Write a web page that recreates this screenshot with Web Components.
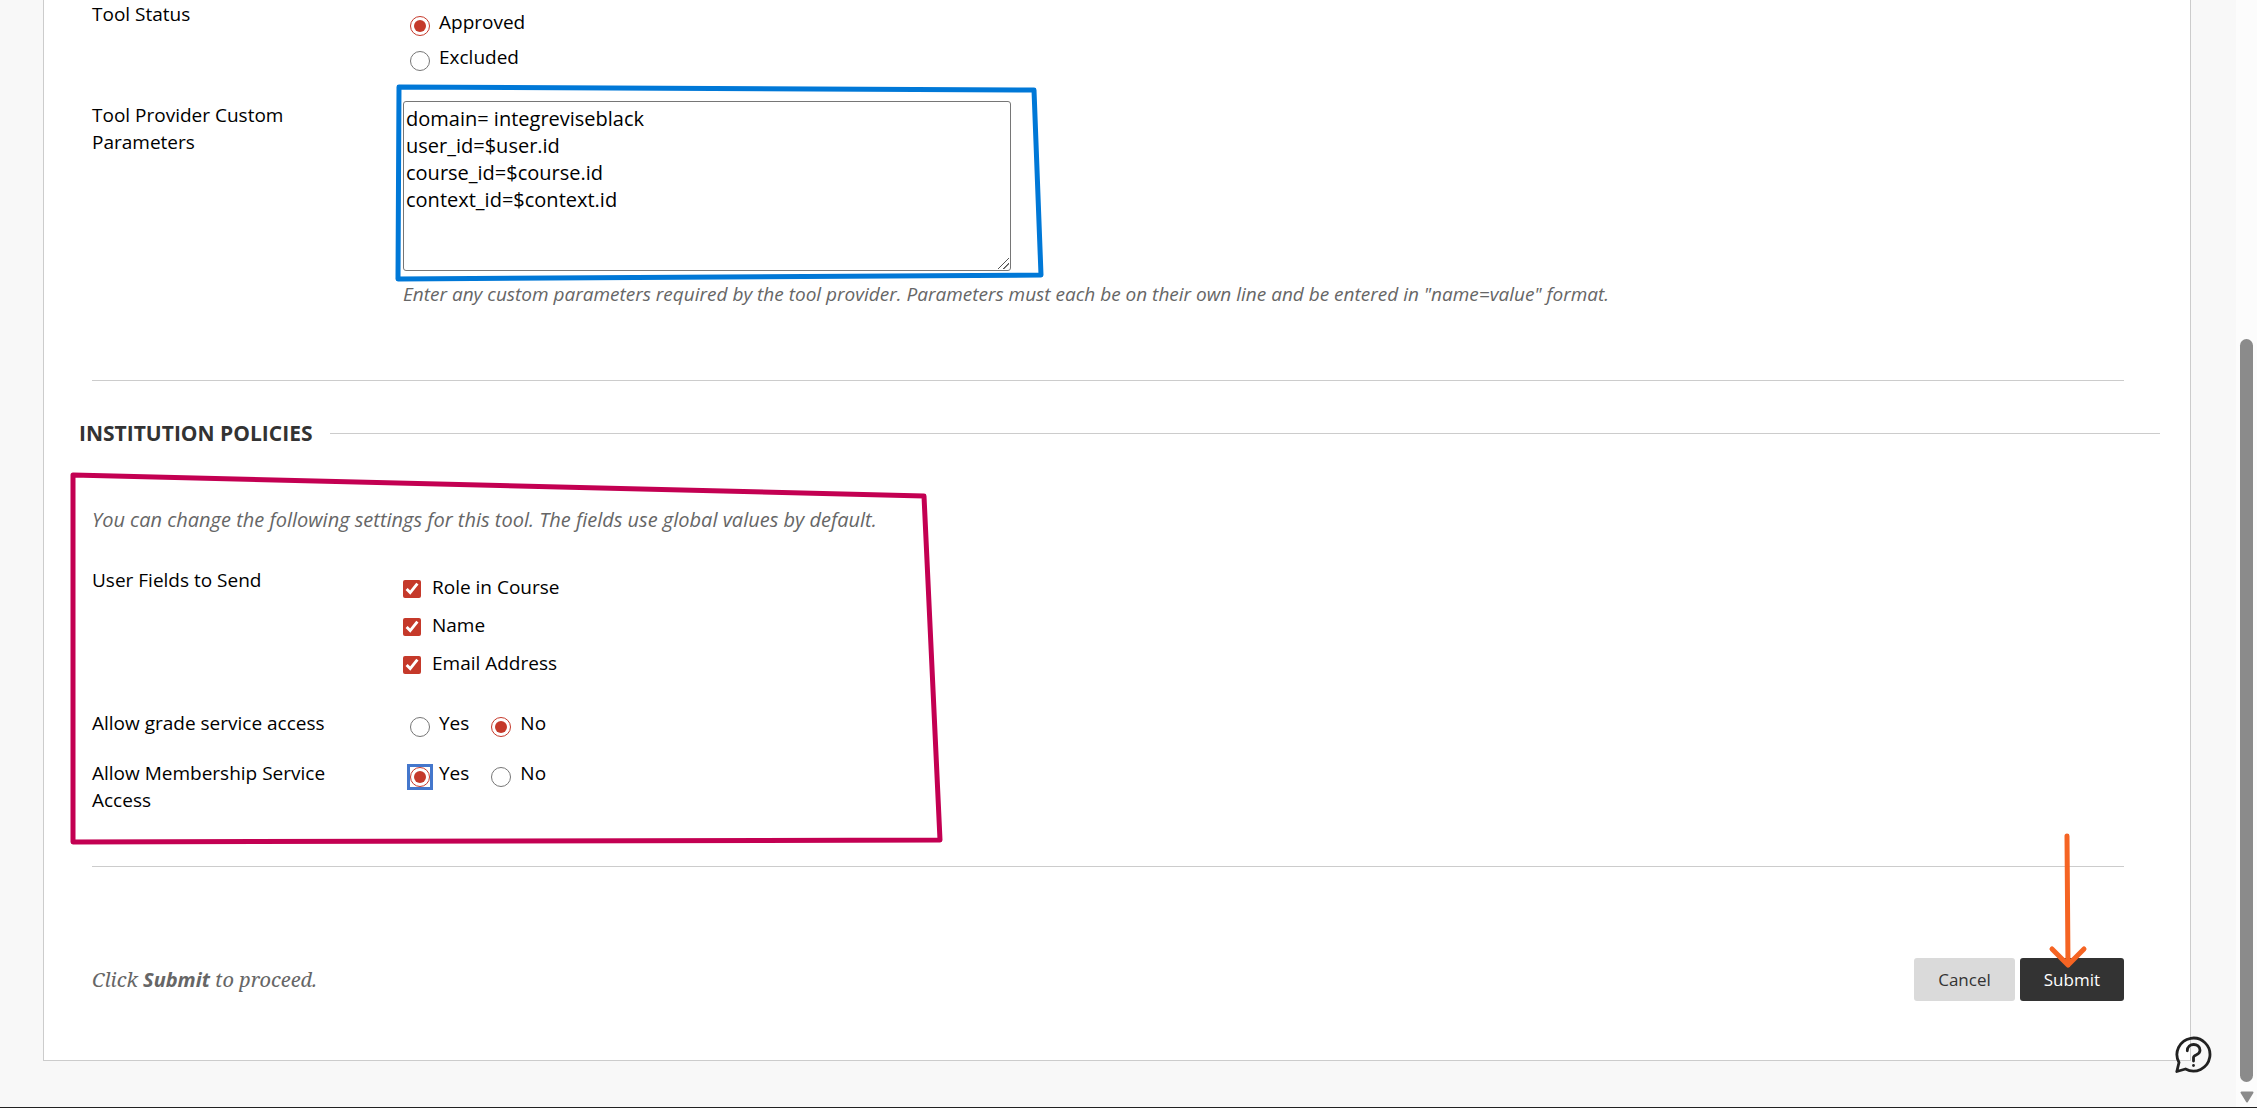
<!DOCTYPE html>
<html lang="en">
<head>
<meta charset="utf-8">
<title>Tool Provider Settings</title>
<style>
html,body{margin:0;padding:0}
body{background:#f8f8f8;color:#000;font:19px/27px "Open Sans","Noto Sans",sans-serif;overflow:hidden}
</style>
</head>
<body>
<tool-page></tool-page>
<script>
const define=(name,html,setup)=>{
  const t=document.createElement('template');
  t.innerHTML=html;
  customElements.define(name,class extends HTMLElement{
    constructor(){
      super();
      this.attachShadow({mode:'open'}).appendChild(t.content.cloneNode(true));
      if(setup)this.setup=setup;
    }
    connectedCallback(){if(this.setup)this.setup(this.shadowRoot);}
  });
};

define('form-row',`
<style>
:host{display:flex;align-items:flex-start}
.label{flex:none;width:256px;margin-right:55px;padding-top:1px}
.field{flex:1;min-width:0}
</style>
<div class="label"><slot name="label"></slot></div>
<div class="field"><slot></slot></div>`);

define('choice-item',`
<style>
:host{display:flex}
label{display:flex;align-items:flex-end}
input{accent-color:#c5392a;flex:none}
input[type=radio]{width:20px;height:20px;margin:0 9px 0 7px}
input[type=checkbox]{width:18px;height:18px;margin:0 11px 3px 0}
:host([active]) input{outline:3px solid #4477cc}
</style>
<label><input><span><slot></slot></span></label>`,function(root){
  const i=root.querySelector('input');
  i.type=this.getAttribute('type');
  i.name=this.getAttribute('name');
  i.checked=this.hasAttribute('checked');
});

define('choice-group',`
<style>
:host{display:flex;flex-direction:column;gap:8px;padding-top:9px}
:host([kind=checks]){gap:11px;padding-top:8px}
:host([kind=inline]){flex-direction:row;gap:15px;padding-top:1px}
</style>
<slot></slot>`);

define('section-title',`
<style>
:host{display:flex;align-items:center;gap:18px}
h2{margin:0;font-size:21px;line-height:27px;font-weight:700;color:#333;text-transform:uppercase}
i{flex:1;height:1px;background:#ccc}
</style>
<h2><slot></slot></h2><i></i>`);

define('action-button',`
<style>
:host{display:flex}
button{height:43px;padding:0 24px;border:0;border-radius:3px;background:#dadada;color:#333;font:17px/27px "Open Sans","Noto Sans",sans-serif}
:host([primary]) button{background:#333;color:#fff}
</style>
<button type="button"><slot></slot></button>`);

define('marked-area',`
<style>
:host{display:block;position:relative}
svg{position:absolute;left:0;top:0;width:1px;height:1px;overflow:visible;pointer-events:none}
path{fill:none;stroke-width:5;stroke-linejoin:round;stroke-linecap:round}
</style>
<slot></slot><svg aria-hidden="true"><path/></svg>`,function(root){
  const p=root.querySelector('path');
  p.setAttribute('d',this.getAttribute('path'));
  p.setAttribute('stroke',this.getAttribute('stroke'));
});

define('help-button',`
<style>
:host{position:absolute;right:24px;bottom:34px}
button{display:block;padding:0;border:0;background:none}
svg{display:block;width:37px;height:37px}
</style>
<button type="button" aria-label="Help"><svg viewBox="0 0 37 37" fill="none" stroke="#222" stroke-width="2.800" stroke-linecap="round" stroke-linejoin="round">
<path d="M1.800 35.500 4 26.500A16.500 16.500 0 1 1 10.500 33Z"/>
<path d="M12.300 14.800C12.300 6.500 25 6.500 25 14.300C25 19.500 18.500 18.500 18.500 21.500V25"/><path d="M18.500 29.500V29.600"/></svg></button>`);

define('scroll-rail',`
<style>
:host{display:flex;flex-direction:column;align-items:center;width:21px;background:#fcfcfc;padding:339px 0 4px;box-sizing:border-box}
.thumb{flex:1;width:13px;border-radius:7px;background:#8b8b8b;margin-bottom:9px}
svg{width:14px;height:12px}
</style>
<div class="thumb"></div><svg viewBox="0 0 14 12"><path d="M1.500 1.500H12.500L7 10.500Z" fill="#8b8b8b" stroke="#8b8b8b" stroke-width="2" stroke-linejoin="round"/></svg>`);

define('tool-page',`
<style>
:host{display:flex;min-height:100vh;box-sizing:border-box;border-bottom:1px solid #222}
main{position:relative;flex:1;padding:0 45px 46px 43px}
form{display:block;background:#fff;border:1px solid #ccc;border-top:0;padding:0 66px 59px 48px}
textarea{display:block;box-sizing:border-box;width:608px;height:170px;margin:0;padding:3px 2px;border:1px solid #767676;border-radius:3px;background:#fff;color:#000;font:20px/27px "Open Sans","Noto Sans",sans-serif}
textarea::-webkit-resizer{background:linear-gradient(135deg,transparent 46%,#555 47% 53%,transparent 54% 70%,#555 71% 77%,transparent 78%) 3px 3px/11px 11px no-repeat}
p{margin:0;font-style:italic;color:#666}
.status{margin-bottom:30px}
.hint{margin-top:10px}
hr{margin:0;border:0;height:1px;background:#ccc}
.first{margin-top:72px}
section-title{margin:39px -36px 0 -13px}
.intro{padding-top:59px;font-size:20px}
.users{margin-top:33px}
.grade{margin-top:32px}
.member{margin-top:22px}
.last{margin-top:52px}
footer{display:flex;align-items:center;gap:5px;margin-top:91px}
footer p{flex:1;font-size:20px;font-family:"Noto Serif","DejaVu Serif",serif}
footer b{font-family:"Open Sans","Noto Sans",sans-serif}
</style>
<main>
<form>
<form-row class="status"><span slot="label">Tool Status</span>
<choice-group><choice-item type="radio" name="status" checked>Approved</choice-item><choice-item type="radio" name="status">Excluded</choice-item></choice-group></form-row>
<form-row><label slot="label" for="params">Tool Provider Custom Parameters</label>
<marked-area stroke="#0078d7" path="M-4-14 631-11 638 174-5 178Z"><textarea id="params" spellcheck="false">domain= integreviseblack
user_id=$user.id
course_id=$course.id
context_id=$context.id</textarea></marked-area>
<p class="hint">Enter any custom parameters required by the tool provider. Parameters must each be on their own line and be entered in "name=value" format.</p></form-row>
<hr class="first">
<section-title>Institution Policies</section-title>
<marked-area stroke="#c30052" path="M-19 28 832 49 848 393-19 395Z">
<p class="intro">You can change the following settings for this tool. The fields use global values by default.</p>
<form-row class="users"><span slot="label">User Fields to Send</span>
<choice-group kind="checks"><choice-item type="checkbox" name="role" checked>Role in Course</choice-item><choice-item type="checkbox" name="name" checked>Name</choice-item><choice-item type="checkbox" name="email" checked>Email Address</choice-item></choice-group></form-row>
<form-row class="grade"><span slot="label">Allow grade service access</span>
<choice-group kind="inline"><choice-item type="radio" name="grade">Yes</choice-item><choice-item type="radio" name="grade" checked>No</choice-item></choice-group></form-row>
<form-row class="member"><span slot="label">Allow Membership Service Access</span>
<choice-group kind="inline"><choice-item type="radio" name="member" checked active>Yes</choice-item><choice-item type="radio" name="member">No</choice-item></choice-group></form-row>
</marked-area>
<hr class="last">
<footer><p>Click <b>Submit</b> to proceed.</p><action-button>Cancel</action-button>
<marked-area stroke="#f56423" path="M47-122 48 7M32-9 48 7 64-9"><action-button primary>Submit</action-button></marked-area></footer>
</form>
<help-button></help-button>
</main>
<scroll-rail></scroll-rail>`);
</script>
</body>
</html>
